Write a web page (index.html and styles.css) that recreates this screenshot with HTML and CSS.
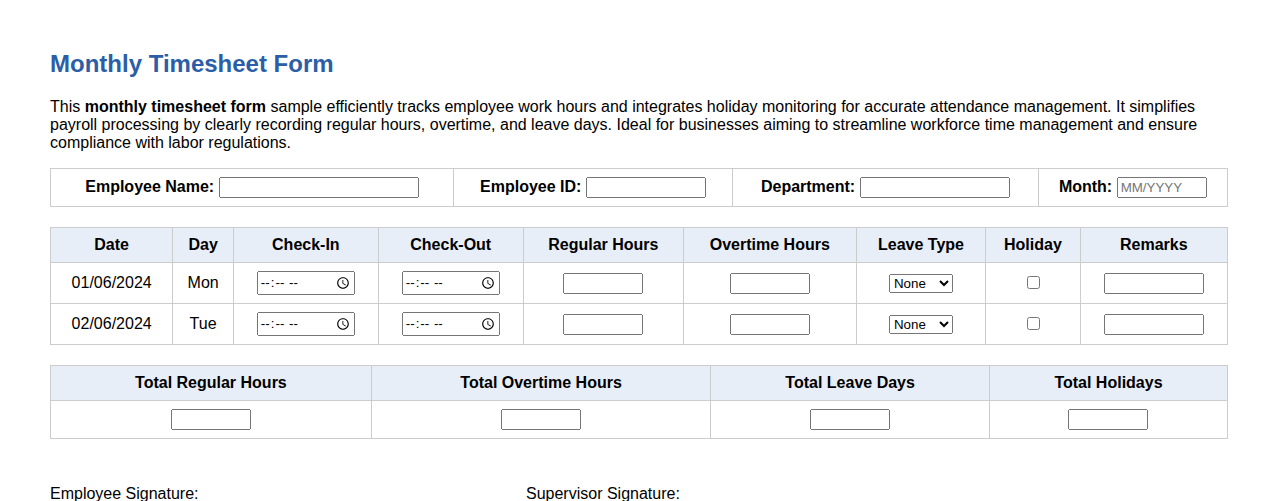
FILE: index.html
```html
<!DOCTYPE html>
<html lang="en">
<head>
<meta charset="utf-8">
<title>Monthly Timesheet Form</title>
<link rel="stylesheet" href="styles.css">
</head>
<body>
<div class="page">
  <h2 class="title">Monthly Timesheet Form</h2>
  <p class="intro">This <strong>monthly timesheet form</strong> sample efficiently tracks employee work hours and integrates holiday monitoring for accurate attendance management. It simplifies payroll processing by clearly recording regular hours, overtime, and leave days. Ideal for businesses aiming to streamline workforce time management and ensure compliance with labor regulations.</p>

  <table class="grid info">
    <tr>
      <td><label class="lbl">Employee Name:</label> <input class="w200" type="text"></td>
      <td><label class="lbl">Employee ID:</label> <input class="w120" type="text"></td>
      <td><label class="lbl">Department:</label> <input class="w150" type="text"></td>
      <td><label class="lbl">Month:</label> <input class="w90" type="text" placeholder="MM/YYYY"></td>
    </tr>
  </table>

  <table class="grid sheet">
    <thead>
      <tr>
        <th>Date</th><th>Day</th><th>Check-In</th><th>Check-Out</th><th>Regular Hours</th><th>Overtime Hours</th><th>Leave Type</th><th>Holiday</th><th>Remarks</th>
      </tr>
    </thead>
    <tbody>
      <tr>
        <td>01/06/2024</td><td>Mon</td>
        <td><input class="time" type="time"></td><td><input class="time" type="time"></td>
        <td><input class="w80" type="text"></td><td><input class="w80" type="text"></td>
        <td><select class="leave"><option>None</option><option>Sick</option><option>Vacation</option></select></td>
        <td><input type="checkbox"></td>
        <td><input class="w100" type="text"></td>
      </tr>
      <tr>
        <td>02/06/2024</td><td>Tue</td>
        <td><input class="time" type="time"></td><td><input class="time" type="time"></td>
        <td><input class="w80" type="text"></td><td><input class="w80" type="text"></td>
        <td><select class="leave"><option>None</option><option>Sick</option><option>Vacation</option></select></td>
        <td><input type="checkbox"></td>
        <td><input class="w100" type="text"></td>
      </tr>
    </tbody>
  </table>

  <table class="grid totals">
    <thead>
      <tr><th>Total Regular Hours</th><th>Total Overtime Hours</th><th>Total Leave Days</th><th>Total Holidays</th></tr>
    </thead>
    <tbody>
      <tr>
        <td><input class="w80" type="text"></td>
        <td><input class="w80" type="text"></td>
        <td><input class="w80" type="text"></td>
        <td><input class="w80" type="text"></td>
      </tr>
    </tbody>
  </table>

  <div class="signatures">
    <div class="sig sig-emp">Employee Signature:</div>
    <div class="sig">Supervisor Signature:</div>
  </div>
</div>
</body>
</html>
```

FILE: styles.css
```css
html, body {
  margin: 0;
  padding: 0;
  background: #ffffff;
}
body {
  font-family: "Liberation Sans", Arial, sans-serif;
  font-size: 16px;
  color: #000;
}
.page {
  padding: 50px 50px 40px 50px;
}
.title {
  margin: 0;
  font-size: 24px;
  font-weight: bold;
  color: #2b5ea7;
}
.intro {
  margin: 20px 0 16px 0;
  line-height: 18px;
}
.grid {
  width: 100%;
  border-collapse: collapse;
  margin-bottom: 20px;
}
.grid th,
.grid td {
  border: 1px solid #cccccc;
  padding: 8px;
  text-align: center;
}
.grid th {
  background: #e8eef8;
  font-weight: bold;
}
.lbl {
  font-weight: bold;
}
input[type="text"],
input[type="time"],
select {
  font-family: "Liberation Sans", Arial, sans-serif;
  font-size: 13.3333px;
}
.w200 { width: 200px; box-sizing: border-box; }
.w150 { width: 150px; box-sizing: border-box; }
.w120 { width: 120px; box-sizing: border-box; }
.w100 { width: 100px; box-sizing: border-box; }
.w90 { width: 90px; box-sizing: border-box; }
.w80 { width: 80px; box-sizing: border-box; }
.time {
  width: 98px;
  height: 24px;
  box-sizing: border-box;
  font-family: "Liberation Mono", monospace;
  font-size: 12px;
  letter-spacing: 0.5px;
}
.leave {
  width: 64px;
  height: 19px;
  box-sizing: border-box;
}
.totals {
  margin-bottom: 0;
}
.signatures {
  display: flex;
  margin-top: 46px;
}
.sig-emp {
  width: 476px;
}
```
